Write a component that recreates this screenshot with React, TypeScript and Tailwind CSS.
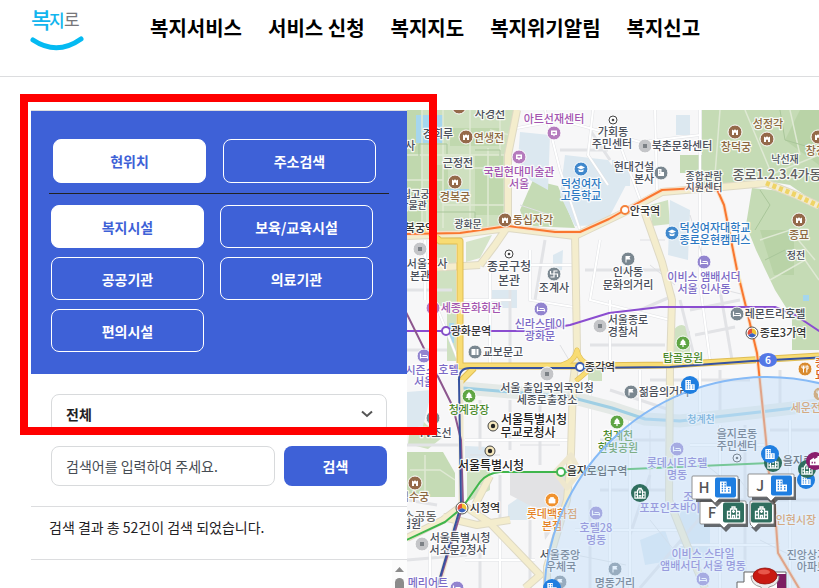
import type { ReactNode } from "react";

const menu = ["복지서비스", "서비스 신청", "복지지도", "복지위기알림", "복지신고"];
const facilities = ["복지시설", "보육/교육시설", "공공기관", "의료기관", "편의시설"];

const ink = "#4a4f5a";
const brown = "#8c673f";
const violet = "#a355b0";
const lavender = "#7b6ac6";
const blue = "#2b78c2";
const green = "#4b8a2c";
const orange = "#e58326";

type Label = [text: string, x: number, y: number, color?: string, size?: number];

const labels: Label[] = [
  ["사경전", 490, 114],
  ["아트선재센터", 554, 119, violet],
  ["경회루", 438, 134],
  ["연생전", 489, 138, brown],
  ["사", 410, 146],
  ["근정전", 458, 163],
  ["국립현대미술관", 519, 172, violet],
  ["서울", 519, 184, violet],
  ["경복궁", 455, 197, brown],
  ["국립고궁", 411, 194, ink, 10],
  ["박물관", 413, 205, ink, 10],
  ["덕성여자", 581, 184, blue],
  ["고등학교", 581, 196, blue],
  ["동십자각", 533, 220, brown],
  ["광화문", 468, 224, ink, 10],
  ["경복궁역", 415, 228, "#333"],
  ["종로구청", 509, 267, ink, 12],
  ["본관", 509, 281, ink, 12],
  ["정부서울청사", 417, 264],
  ["본관", 420, 276],
  ["가회동", 613, 132],
  ["주민센터", 612, 144],
  ["북촌문화센터", 682, 146],
  ["성정각", 768, 124, brown],
  ["창덕궁", 736, 147, brown],
  ["낙선재", 785, 159, ink, 10],
  ["창경궁", 821, 151, brown],
  ["현대건설", 634, 167],
  ["본사", 644, 179],
  ["종합관람", 704, 176, ink, 10],
  ["지원센터", 704, 187, ink, 10],
  ["종로1.2.3.4가동", 777, 175, "#5f5f62", 13],
  ["안국역", 645, 211, "#333"],
  ["덕성여자대학교", 715, 228, blue],
  ["종로운현캠퍼스", 715, 240, blue],
  ["종묘", 799, 235, brown],
  ["정전", 796, 255, ink, 10],
  ["인사동", 628, 272],
  ["문화의거리", 628, 285],
  ["이비스 앰배서더", 704, 277, lavender],
  ["서울 인사동", 704, 289, lavender],
  ["조계사", 554, 288],
  ["세종문화회관", 471, 308, violet],
  ["신라스테이", 540, 324, lavender],
  ["광화문", 540, 336, lavender],
  ["광화문역", 471, 331, "#333"],
  ["서울종로", 628, 320],
  ["경찰서", 623, 332],
  ["교보문고", 503, 352],
  ["종각역", 600, 367, "#333"],
  ["시즌스 호텔", 432, 370, lavender],
  ["서울", 424, 382, lavender],
  ["서울 출입국외국인청", 547, 388],
  ["세종로출장소", 547, 400],
  ["청계광장", 469, 410, green],
  ["서울특별시청", 534, 420, "#222", 12],
  ["무교로청사", 528, 433, "#222", 12],
  ["TV조선", 435, 433],
  ["레몬트리호텔", 775, 314],
  ["종로3가역", 783, 333, "#333"],
  ["탑골공원", 683, 358, green],
  ["젊음의거리", 664, 392],
  ["청계천", 701, 419, "#4d94c4", 10],
  ["청계천", 618, 436, green],
  ["한빛공원", 618, 448, green],
  ["을지로동", 737, 434],
  ["주민센터", 737, 446],
  ["세운전자", 811, 408, orange],
  ["종", 820, 363, "#d9601a"],
  ["묘", 820, 375, "#d9601a"],
  ["서울특별시청", 491, 466, "#222", 12],
  ["을지로입구역", 597, 471, "#333"],
  ["롯데시티호텔", 677, 463, lavender],
  ["명동", 677, 475, lavender],
  ["덕수궁", 414, 497, brown],
  ["시청역", 485, 508, "#333"],
  ["롯데백화점", 552, 514, orange],
  ["본점", 552, 526, orange],
  ["호텔28", 596, 528, lavender],
  ["명동", 596, 540, lavender],
  ["조", 688, 497, lavender],
  ["포포인츠바이쉐라톤", 685, 508, lavender],
  ["소공동", 420, 517, "#666", 12],
  ["법원", 411, 524],
  ["서울특별시청", 460, 538],
  ["서소문2청사", 458, 550],
  ["서울중앙", 560, 555],
  ["우체국", 561, 567],
  ["이비스 스타일", 703, 554, lavender],
  ["앰배서더 서울 명동", 703, 566, lavender],
  ["명동거리", 615, 583],
  ["메리어트", 428, 583, lavender],
  ["인현시장", 796, 520, orange],
  ["진앙상가", 807, 555],
  ["아파트", 812, 567],
  ["을지로4가", 806, 461, "#333"],
];

type Kind = "palace" | "art" | "hotel" | "inn" | "flag" | "tree" | "school" | "dot" | "hall" | "ring" | "office" | "bag" | "temple" | "book" | "food";

const poiColor: Record<Kind, string> = {
  palace: "#94694a",
  art: "#b57bbd",
  hotel: "#9284cf",
  inn: "#7a8790",
  flag: "#7a8790",
  tree: "#5fa544",
  school: "#4088cc",
  dot: "#c4c5c8",
  hall: "#f6e8bd",
  ring: "#fff",
  office: "#7a8790",
  bag: "#f0922e",
  temple: "#7a8790",
  book: "#7a8790",
  food: "#d98a2e",
};

const bed = <path d="M-3.500-2.500v5M-3.500 1.500h7v1M-1.500-.5h4q1 0 1 2" fill="none" stroke="#fff" strokeWidth="1.200" />;

const poiGlyph: Record<Kind, ReactNode> = {
  palace: <path d="M-3 3v-5.500l1.500 1L0-2.800l1.500 1.300 1.500-1V3H1V.8h-2V3z" fill="#fff" />,
  art: <path d="M-3-2.500h6V2H1l-1 1.500L-1 2h-2zM-1.500-1v1.500h3V-1z" fill="#fff" fillRule="evenodd" />,
  hotel: bed,
  inn: bed,
  flag: <path d="M-2.500 3.500v-6.500h5l-1 1.500 1 2h-4v3z" fill="#fff" />,
  tree: <path d="M0-4 3-.5H1.800L3.500 2H.6v2H-.6V2h-2.900l1.700-2.500H-3z" fill="#fff" />,
  school: <path d="M0-3.500 4-1.500 0 .5-4-1.500zM-2.500.3 0 1.500 2.500.3V2.200Q0 4-2.500 2.200z" fill="#fff" />,
  dot: <rect x="-2" y="-2" width="4" height="4" fill="#7c8186" />,
  hall: <circle r="2.200" fill="#222" />,
  ring: <circle r="1.300" fill="#444" />,
  office: <path d="M-3 3v-7h3.500v3H3v4zM-1.800-2.500v1h1v-1zM-1.800-.3v1h1v-1z" fill="#fff" fillRule="evenodd" />,
  bag: <path d="M-3-1h6v4h-6zM-1.500-1v-1.500h3V-1" fill="#fff" stroke="#fff" strokeWidth=".8" />,
  temple: <path d="M-3.500-3v3h7v3M-3.500 3H0v-6h3.500" fill="none" stroke="#fff" strokeWidth="1.200" />,
  book: <path d="M-3.500-3h4v6h-4zM1.500-3h2v6h-2z" fill="#fff" />,
  food: <path d="M-1.500-3.500v7M1.800-3.500v7M-3-3.500v2.500h3v-2.500M1.800-3h1.200v3h-1.200" fill="none" stroke="#fff" />,
};

const pois: [Kind, number, number][] = [
  ["palace", 466, 137], ["palace", 455, 182], ["palace", 505, 220], ["palace", 459, 107],
  ["palace", 735, 132], ["palace", 767, 139], ["palace", 818, 137], ["palace", 799, 220], ["palace", 415, 483],
  ["art", 554, 133], ["art", 519, 157], ["art", 433, 308],
  ["school", 581, 169], ["school", 672, 233],
  ["ring", 613, 120], ["ring", 509, 254], ["ring", 737, 458],
  ["dot", 645, 146], ["dot", 420, 249], ["dot", 600, 326], ["dot", 547, 374], ["dot", 422, 544],
  ["office", 661, 173], ["flag", 628, 259], ["flag", 631, 392], ["flag", 615, 569], ["flag", 560, 582],
  ["temple", 554, 274], ["book", 475, 352], ["book", 433, 418],
  ["hotel", 704, 262], ["hotel", 541, 309], ["hotel", 424, 356], ["hotel", 677, 449],
  ["hotel", 596, 513], ["hotel", 703, 579], ["hotel", 457, 588], ["inn", 737, 314],
  ["tree", 469, 396], ["tree", 683, 343], ["tree", 617, 422],
  ["hall", 493, 426], ["hall", 490, 451], ["bag", 552, 500], ["food", 805, 369], ["food", 820, 394],
];

const stations: [number, number, string][] = [
  [446, 331, "#8650c8"],
  [580, 367, "#3f5fae"],
  [625, 210, "#f4813a"],
  [561, 472, "#45b553"],
];

const transferStations: [number, number][] = [[752, 333], [462, 508]];

function Poi({ kind, x, y }: { kind: Kind; x: number; y: number }) {
  const outlined = kind === "hall" || kind === "ring";
  return (
    <g transform={`translate(${x} ${y})`}>
      <circle r={kind === "ring" ? 4 : outlined ? 5 : 7} fill={poiColor[kind]} stroke={outlined ? "#444" : "#fff"} strokeWidth="1" />
      {poiGlyph[kind]}
    </g>
  );
}

/* Office tower with a lower wing */
function TowerGlyph() {
  return (
    <g>
      <path d="M-5.500 6V-6H1V-1H5.500V6z" fill="#fff" />
      <path d="M-3.800-4h1.300M-1-4h1.300M-3.800-1.500h1.300M-1-1.500h1.300M-3.800 1h1.300M-1 1h1.300M2.500 1.200h1.500M2.500 3.500h1.500M-3.800 3.500h1.300M-1 3.500h1.300" stroke="#1f7ee0" strokeWidth="1.300" />
    </g>
  );
}

/* Welfare hall with a centre gable */
function HallGlyph() {
  return (
    <g fill="none" stroke="#fff" strokeWidth="1.300">
      <path d="M-3 6v-9.500h6V6M-3-1h-3v7H6v-7H3M-1.500-3.500v-2h3v2M-1 6V3h2v3" />
      <path d="M-1.500-1h3M0-2.500v3M-4.500 1.500v2M4.500 1.500v2" />
    </g>
  );
}

const tones = { blue: "#1f7ee0", green: "#2f6e5e", purple: "#8a1d6c" };
type Tone = keyof typeof tones;

function RoundMarker({ x, y, tone }: { x: number; y: number; tone: Tone }) {
  return (
    <g transform={`translate(${x} ${y})`}>
      <circle r="9" fill={tones[tone]} />
      <g transform="scale(.85)">
        {tone === "blue" ? <TowerGlyph /> : tone === "green" ? <HallGlyph /> : <path d="M-6 5V-1L-1-4v2l4-2.500V-6h2v11zM-4 1v2h1.500V1zM-1 1v2H.5V1z" fill="#fff" fillRule="evenodd" />}
      </g>
    </g>
  );
}

function Callout({ x, y, tone, letter, tip }: { x: number; y: number; tone: Tone; letter?: string; tip: number }) {
  const width = letter ? 46 : 24;
  return (
    <g transform={`translate(${x} ${y})`}>
      <path d={`M4 3h${width - 2}v23H${tip + 7}l-5 5-5-5H4z`} fill="#222" opacity=".65" />
      <path d={`M1 0h${width - 2}q1 0 1 1v21q0 1-1 1H${tip + 4}l-4 4-4-4H1q-1 0-1-1V1q0-1 1-1z`} fill="#fff" stroke="#777" strokeWidth=".8" />
      <rect x={width - 23} y="1.500" width="21" height="20" rx="2" fill={tones[tone]} />
      <g transform={`translate(${width - 12.5} 11.500)`}>{tone === "blue" ? <TowerGlyph /> : <HallGlyph />}</g>
      {letter && (
        <text x="12" y="17" textAnchor="middle" fontSize="15" fontWeight="500" fill="#555">{letter}</text>
      )}
    </g>
  );
}

function MapDrawing() {
  return (
    <svg className="h-full w-full" role="img" aria-label="복지지도">
      <g transform="translate(-407 -110)">
        {/* Land use */}
        <rect x="407" y="110" width="2000" height="2000" fill="#f7f7f8" />
        <path d="M407 110H517L508 155V226L460 232H407z" fill="#cee0bf" />
        <path d="M407 110h15v122h-15zM450 128h50v18h-50zM430 165h18v35h-18zM475 155h28v60h-28z" fill="#c0d8ae" />
        <path d="M416 115h27v28h-27z" fill="#a5d6ee" />
        <path d="M445 189h24v4h-24z" fill="#a5d6ee" />
        <path d="M702 110H2400V205H819L790 185 760 180 702 186z" fill="#c5dbb5" />
        <path d="M752 188 790 192 819 205H2400V350H792V317L775 290 756 250 746 225z" fill="#c5dbb5" />
        <path d="M800 110l-15 30 34 25v-55zM760 230h34v45h-20z" fill="#b9d3a7" />
        <path d="M680 155h22v18h-22zM533 180 558 186 575 228 525 226 520 210z" fill="#c5dbb5" />
        <path d="M650 205 668 200 670 224 652 226zM436 243h20v118h-9v-55h-11z" fill="#cfe1c1" />
        <path d="M466 242 492 235 480 258 466 262z" fill="#d5e4c8" />
        <path d="M407 452H443L455 473V497H407z" fill="#c5dbb5" />
        <path d="M467 470h23v20l-23 12zM672 332q10-14 18 0v29h-18z" fill="#cfe1c1" />
        <path d="M588 367h14v14h-14zM412 410l15 15 16 12-15 12-20-5z" fill="#cfe1c1" />
        <path d="M520 132 550 135 548 190 530 180 518 160zM565 155 608 160 626 185 605 225 575 226 560 195zM670 200 690 210 688 260 668 255zM553 255 563 250 562 270 553 272zM492 290h25v18h-25zM407 392l25-2-10 40-15 3zM465 446l25 1v22h-25zM508 505l22-15v30h-22zM680 510h30v50h-30zM640 540l25-10 10 30-30 5zM612 160h18v26h-18zM676 115h14v20h-14z" fill="#dce8f0" />
        <path d="M510 473H567V508L545 540 542 512 510 495z" fill="#e2e2e4" />
        <path d="M449 323h5v20h-5zM803 295h6v6h-6z" fill="#a5d6ee" />

        {/* Palace paths */}
        <g fill="none" stroke="#dfe9d4" strokeWidth="1.500">
          <path d="M422 110v120M443 110v118M470 110v118M488 148v80M407 155h100M407 180h36M443 205h65M470 168h38M427 205v25M490 130l20 5M500 110v60" />
          <path d="M720 110l-5 65M745 110l25 60M770 175l49-20M790 110l10 45M760 240l30-10 25 30M770 280l35-20 14 20M410 470h30l15 10M425 455v40" />
        </g>
        <g fill="none" stroke="#a9c69a" strokeWidth="1">
          <path d="M419 156v-12h28v10M475 150h25v15M430 212h45v12M780 110l5 30 34 10M760 190l10 15-15 25M765 260l20-10" />
        </g>

        {/* Minor streets */}
        <g fill="none" stroke="#e2e3e6" strokeWidth="3">
          <path d="M517 128 560 120 640 142 700 135M545 110l15 60 20 60M593 110l-5 45 20 30M655 110l2 80M700 110v170M619 142 642 205M560 150h48M590 130l20 30" />
          <path d="M480 265h95M490 265v100M510 290v75M530 250v50l50 8M545 240l-10 60M461 300h50M407 290h45M425 240v60M430 290l30 75M407 350h40M600 240l-10 60 80 20M585 270h80M610 300v60M590 345h75M640 310l35-15M680 300l15 60M700 285l10 75M720 290l12 70M690 310l50-10M695 335l40-8" />
          <path d="M470 385l100 8M480 400v50M510 400v50M540 405v60M465 440h105M590 380v90M610 390l60 20M640 370v40M650 380h100M700 370v50M720 370v45M780 370v40M600 440h65M600 490h65M630 420v168M650 475l-20 60M575 530h110M590 500v88M610 480v108M720 425v163M745 425v163M690 445h80M680 545h100M770 430h49M790 420v168" />
          <path d="M407 445h55M480 485v40M500 475v45M530 520v68M407 560l60-5M430 550v38M480 540v48M500 535v53M465 560h70M407 500l30 5M640 588l60-70M700 500h119" />
        </g>
        <g fill="none" stroke="#fff" strokeWidth="2">
          <path d="M517 128 560 120 640 142 700 135M545 110l15 60 20 60M593 110l-5 45 20 30M655 110l2 80M700 110v170M480 265h95M490 265v100M530 250v50l50 8M425 240v60M430 290l30 75M461 300h50M600 240l-10 60 80 20M610 300v60M700 285l10 75M470 385l100 8M465 440h105M590 380v90M640 370v40M700 370v50M610 480v108M630 420v168M575 530h110M720 425v163M690 445h80M680 545h100M790 420v168M430 550v38M500 535v53M465 560h70M619 142 642 205" />
        </g>
        <g fill="none" stroke="#dfe0e3" strokeWidth="1">
          <path d="M520 205l30 10M640 240h25M650 265l25 20M690 215l12 40M725 290l20 5M560 345l12 20M470 455h30M520 445h40M600 410l30 8M650 430v60M700 460l25 20M740 480l30 40M650 520l40 50M760 540l40 20M576 555l50 10" />
        </g>

        {/* Stream */}
        <path d="M463 388 570 397 612 408 645 419 680 421 742 414 819 405" fill="none" stroke="#e4e9e6" strokeWidth="13" />
        <path d="M463 388 570 397 612 408 645 419 680 421 742 414 819 405" fill="none" stroke="#9fcfe4" strokeWidth="3" />

        {/* Arterial roads */}
        <g fill="none" strokeLinejoin="round">
          <g stroke="#ded9c4" strokeWidth="8">
            <path d="M517 110 508 155V226L495 245 480 265M407 236 460 234 508 228 575 236 625 212 662 192 722 187 766 183 796 195 819 206M575 234 577 350 573 383 571 453 567 500 547 567V588M642 205 662 262 672 300 670 367 669 500 693 560 705 588" />
            <path d="M407 538 443 520 463 505 490 523 540 575 525 588M443 517 477 525 510 520M490 476 475 505M480 265 430 268" />
          </g>
          <g stroke="#f4edcd" strokeWidth="6">
            <path d="M517 110 508 155V226L495 245 480 265M407 236 460 234 508 228 575 236 625 212 662 192 722 187 766 183 796 195 819 206M575 234 577 350 573 383 571 453 567 500 547 567V588M642 205 662 262 672 300 670 367 669 500 693 560 705 588" />
            <path d="M407 538 443 520 463 505 490 523 540 575 525 588M443 517 477 525 510 520M490 476 475 505M480 265 430 268" />
          </g>
          <path d="M766 183 796 195 819 206" stroke="#efd467" strokeWidth="5" strokeDasharray="4 3" />
          <path d="M425 228 440 241H460V366H580L670 365 752 360 819 356M460 382 474 368" stroke="#dfbd55" strokeWidth="7" />
          <path d="M562 365Q575 361 577 350 579 361 590 365M590 369 576 381" stroke="#dfbd55" strokeWidth="5" />
          <path d="M425 228 440 241H460V366H580L670 365 752 360 819 356M460 382 474 368" stroke="#f8dc73" strokeWidth="5" />
          <path d="M562 365Q575 361 577 350 579 361 590 365M590 369 576 381" stroke="#f8dc73" strokeWidth="4" />
          <path d="M461 380V505M461 505 438 588M555 472 571 455 580 472 567 488z" stroke="#eee7ce" strokeWidth="5" />
        </g>

        {/* Subway lines */}
        <g fill="none" strokeLinejoin="round" strokeLinecap="round">
          <path d="M407 234 460 233 508 226 555 232 580 232 609 219 625 210 662 190 716 187 724 205 737 270 746 307 757 353 766 440 768 467 775 510 778 553 800 590" stroke="#f9e0c8" strokeWidth="4" />
          <path d="M407 234 460 233 508 226 555 232 580 232 609 219 625 210 662 190 716 187 724 205 737 270 746 307 757 353 766 440 768 467 775 510 778 553 800 590" stroke="#f9772f" strokeWidth="2" />
          <path d="M400 331H535L570 325 609 313 660 307H775L795 315 819 331" stroke="#8b4dd0" strokeWidth="2" />
          <path d="M400 300 453 407 461 440 463 505 437 590" stroke="#8c568e" strokeWidth="2" />
          <path d="M437 588 461 505 459 380Q459 368 470 368H580L670 367 752 361 830 357" stroke="#3652a0" strokeWidth="2" />
          <path d="M400 543 445 522 462 508 480 482Q487 473 500 472H561L770 463" stroke="#3fb64c" strokeWidth="2" />
        </g>
        {stations.map(([x, y, color]) => (
          <circle key={x} cx={x} cy={y} r="4" fill="#fff" stroke={color} strokeWidth="2" />
        ))}
        {transferStations.map(([x, y]) => (
          <g key={x} transform={`translate(${x} ${y})`}>
            <circle r="6" fill="#fff" stroke="#555" />
            <path d="M0 0V-4.500A4.500 4.500 0 0 1 4 2z" fill="#f0c332" />
            <path d="M0 0 4 2A4.500 4.500 0 0 1-4 2z" fill="#3b62bd" />
            <path d="M0 0-4 2A4.500 4.500 0 0 1 0-4.500z" fill="#e2503c" />
          </g>
        ))}
        <ellipse cx="768" cy="360" rx="9" ry="7" fill="#5377e6" />
        <text x="768" y="364" textAnchor="middle" fontSize="10" fontWeight="700" fill="#fff">6</text>

        {pois.map(([kind, x, y]) => (
          <Poi key={`${kind}-${x}-${y}`} kind={kind} x={x} y={y} />
        ))}
        {labels.map(([text, x, y, color = ink, size = 11]) => (
          <text
            key={`${text}-${x}-${y}`}
            x={x}
            y={y + 4}
            textAnchor="middle"
            fontSize={size}
            fontWeight="500"
            fill={color}
            stroke="#fff"
            strokeOpacity=".85"
            strokeWidth="2.500"
            strokeLinejoin="round"
            className="[paint-order:stroke]"
          >
            {text}
          </text>
        ))}

        {/* Search radius */}
        <circle cx="767" cy="600" r="223" fill="#bfdcfa" fillOpacity=".44" stroke="#86baf6" strokeWidth="2" />

        {/* Search results */}
        <RoundMarker x={690} y={385} tone="blue" />
        <RoundMarker x={773} y={463} tone="green" />
        <RoundMarker x={770} y={454} tone="blue" />
        <RoundMarker x={806} y={480} tone="blue" />
        <RoundMarker x={807} y={469} tone="green" />
        <RoundMarker x={815} y={461} tone="purple" />
        <RoundMarker x={640} y={493} tone="green" />
        <RoundMarker x={552} y={588} tone="blue" />
        <Callout x={700} y={501} tone="green" letter="F" tip={24} />
        <Callout x={750} y={501} tone="green" tip={4} />
        <Callout x={692} y={476} tone="blue" letter="H" tip={23} />
        <Callout x={748} y={474} tone="blue" letter="J" tip={23} />

        {/* Current position */}
        <path d="M744 572h42v18h-49v-8h7z" fill="#fff" stroke="#666" />
        <path d="M777 574h9v16h-9z" fill="#7d1e62" />
        <path d="M751 576q0 9 10 11l4 8 4-8q10-2 10-11z" fill="#ececec" stroke="#8b8b8b" strokeWidth=".8" />
        <ellipse cx="765" cy="576" rx="12" ry="8" fill="#c91a12" stroke="#8e120d" strokeWidth=".8" />
        <ellipse cx="764" cy="572" rx="6" ry="2.500" fill="#e8574b" />
      </g>
    </svg>
  );
}

function Logo() {
  return (
    <svg width="54" height="48" viewBox="0 0 54 48" role="img" aria-label="복지로">
      <g fill="#12b5ee" fontWeight="500">
        <text x="1" y="24" fontSize="22">복</text>
        <text x="19" y="23" fontSize="17">지</text>
      </g>
      <text x="34" y="22" fontSize="17" fill="#77777b">로</text>
      <path d="M3 36Q27 52 51 35" fill="none" stroke="#04baf2" strokeWidth="5" strokeLinecap="round" />
    </svg>
  );
}

function Choice({ label, selected = false, tall = false }: { label: string; selected?: boolean; tall?: boolean }) {
  return (
    <button
      type="button"
      aria-pressed={selected}
      className={`w-[153px] rounded-lg border border-white text-sm font-bold ${tall ? "h-11" : "h-[43px]"} ${
        selected ? "bg-white text-[#3e61d7]" : "text-white"
      }`}
    >
      {label}
    </button>
  );
}

export default function App() {
  return (
    <div className="relative flex h-screen flex-col overflow-hidden bg-white font-['Noto_Sans_CJK_KR','Liberation_Sans',sans-serif] text-[#1e2124]">
      <header className="flex shrink-0 items-start gap-[66px] border-b border-[#dcdddf] pt-1 pb-6 pl-[30px]">
        <a href="#" aria-label="복지로">
          <Logo />
        </a>
        <nav className="flex gap-[26px] pt-2 text-xl leading-8 font-bold whitespace-nowrap text-black">
          {menu.map((item) => (
            <a key={item} href="#">
              {item}
            </a>
          ))}
        </nav>
      </header>

      <main className="mt-[33px] flex min-h-0 flex-1 pl-[31px]">
        <aside className="flex w-[376px] shrink-0 flex-col border-t border-[#dcdddf]">
          <div className="bg-[#3e61d7] px-[18px] pt-7 pb-[22px]">
            <div className="flex gap-[17px] px-1">
              <Choice label="현위치" selected tall />
              <Choice label="주소검색" tall />
            </div>
            <hr className="mt-2.5 mb-[11px] border-[#222]" />
            <div className="flex flex-wrap gap-x-4 gap-y-[9px] px-0.5">
              {facilities.map((name, index) => (
                <Choice key={name} label={name} selected={index === 0} />
              ))}
            </div>
          </div>

          <form className="flex flex-col gap-3 border-b border-[#dcdddf] p-5">
            <div className="grid items-center">
              <select
                aria-label="시설 종류"
                className="col-start-1 row-start-1 h-10 appearance-none rounded-lg border border-[#d8dadc] bg-white px-3.5 text-sm font-bold"
              >
                <option>전체</option>
              </select>
              <svg className="pointer-events-none col-start-1 row-start-1 mr-3.5 justify-self-end" width="12" height="8" viewBox="0 0 12 8" aria-hidden="true">
                <path d="m1 1.500 5 4.500 5-4.500" fill="none" stroke="#555" strokeWidth="2" />
              </svg>
            </div>
            <div className="flex gap-[9px]">
              <input
                type="text"
                aria-label="검색어"
                placeholder="검색어를 입력하여 주세요."
                className="h-10 min-w-0 flex-1 rounded-lg border border-[#d8dadc] px-3.5 text-sm placeholder:text-[#464c53]"
              />
              <button type="button" className="h-10 w-[103px] rounded-lg bg-[#3e61d7] text-sm font-bold text-white">
                검색
              </button>
            </div>
          </form>

          <p className="border-b border-[#dcdddf] px-[18px] pt-2 pb-5 text-sm leading-6">
            검색 결과 총 52건이 검색 되었습니다.
          </p>
          <div className="flex min-h-0 flex-1 justify-end overflow-hidden">
            <div className="flex w-[15px] flex-col items-center gap-1.5 bg-[#fcfcfc] pt-[7px]">
              <svg className="shrink-0" width="9" height="5" viewBox="0 0 9 5" aria-hidden="true">
                <path d="M4.500 0 9 5H0z" fill="#8b8b8b" />
              </svg>
              <div className="h-24 w-[9px] shrink-0 rounded-full bg-[#8b8b8b]" />
            </div>
          </div>
        </aside>

        <section className="min-w-0 flex-1 overflow-hidden" aria-label="지도">
          <MapDrawing />
        </section>
      </main>

      <div className="pointer-events-none absolute top-[94px] left-5 h-[341px] w-[417px] border-8 border-[#ff0000]" />
    </div>
  );
}
